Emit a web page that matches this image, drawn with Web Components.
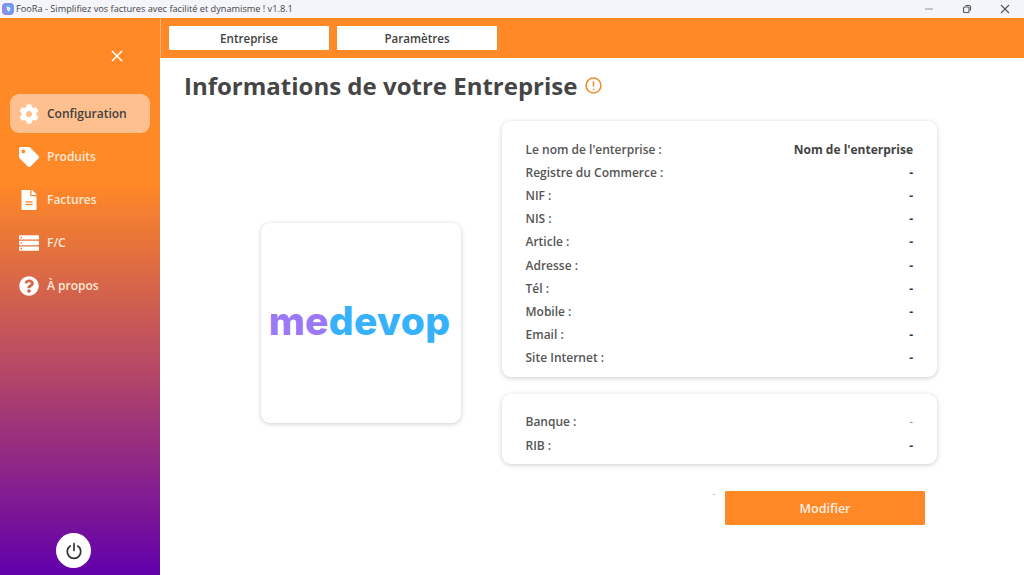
<!DOCTYPE html>
<html lang="fr">
<head>
<meta charset="utf-8">
<title>FooRa</title>
<style>
  html, body { margin: 0; height: 100%; overflow: hidden; }
  body { font-family: "Open Sans", "Noto Sans", sans-serif; color: #444; background: #fff; }
  app-shell { height: 575px; }
</style>
</head>
<body>
<app-shell>
  <title-bar slot="title" label="FooRa - Simplifiez vos factures avec facilité et dynamisme ! v1.8.1"></title-bar>
  <side-bar slot="side">
    <nav-item icon="cog" active>Configuration</nav-item>
    <nav-item icon="tag">Produits</nav-item>
    <nav-item icon="file">Factures</nav-item>
    <nav-item icon="server">F/C</nav-item>
    <nav-item icon="help">À propos</nav-item>
  </side-bar>
  <top-tabs slot="tabs">
    <tab-button>Entreprise</tab-button>
    <tab-button>Paramètres</tab-button>
  </top-tabs>
  <company-page slot="main">
    <info-card>
      <info-row label="Le nom de l'enterprise :" value="Nom de l'enterprise" strong></info-row>
      <info-row label="Registre du Commerce :" value="-"></info-row>
      <info-row label="NIF :" value="-"></info-row>
      <info-row label="NIS :" value="-"></info-row>
      <info-row label="Article :" value="-"></info-row>
      <info-row label="Adresse :" value="-"></info-row>
      <info-row label="Tél :" value="-"></info-row>
      <info-row label="Mobile :" value="-"></info-row>
      <info-row label="Email :" value="-"></info-row>
      <info-row label="Site Internet :" value="-"></info-row>
    </info-card>
    <info-card>
      <info-row label="Banque :" value="-" light></info-row>
      <info-row label="RIB :" value="-"></info-row>
    </info-card>
  </company-page>
</app-shell>

<script>
const ICONS = {
  cog: ['0 0 512 512', 'M487.4 315.7l-42.6-24.6c4.3-23.2 4.3-47 0-70.2l42.6-24.6c4.9-2.8 7.1-8.6 5.5-14-11.1-35.6-30-67.8-54.7-94.6-3.8-4.1-10-5.1-14.8-2.3L380.8 110c-17.9-15.4-38.5-27.3-60.8-35.1V25.8c0-5.6-3.9-10.5-9.4-11.7-36.7-8.2-74.3-7.8-109.2 0-5.5 1.2-9.4 6.1-9.4 11.7V75c-22.2 7.9-42.8 19.8-60.8 35.1L88.7 85.5c-4.9-2.8-11-1.9-14.8 2.3-24.7 26.7-43.6 58.9-54.7 94.6-1.7 5.4.6 11.2 5.5 14L67.3 221c-4.3 23.2-4.3 47 0 70.2l-42.6 24.6c-4.9 2.8-7.1 8.6-5.5 14 11.1 35.6 30 67.8 54.7 94.6 3.8 4.1 10 5.1 14.8 2.3l42.6-24.6c17.9 15.4 38.5 27.3 60.8 35.1v49.2c0 5.6 3.9 10.5 9.4 11.7 36.7 8.2 74.3 7.8 109.2 0 5.5-1.2 9.4-6.1 9.4-11.7v-49.2c22.2-7.9 42.8-19.8 60.8-35.1l42.6 24.6c4.9 2.8 11 1.9 14.8-2.3 24.7-26.7 43.6-58.9 54.7-94.6 1.5-5.5-.7-11.3-5.6-14.1zM256 336c-44.1 0-80-35.9-80-80s35.9-80 80-80 80 35.9 80 80-35.9 80-80 80z'],
  tag: ['0 0 512 512', 'M0 252.118V48C0 21.49 21.49 0 48 0h204.118a48 48 0 0 1 33.941 14.059l211.882 211.882c18.745 18.745 18.745 49.137 0 67.882L293.823 497.941c-18.745 18.745-49.137 18.745-67.882 0L14.059 286.059A48 48 0 0 1 0 252.118zM112 64c-26.51 0-48 21.49-48 48s21.49 48 48 48 48-21.49 48-48-21.49-48-48-48z'],
  file: ['0 0 384 512', 'M224 136V0H24C10.7 0 0 10.7 0 24v464c0 13.3 10.7 24 24 24h336c13.3 0 24-10.7 24-24V160H248c-13.2 0-24-10.8-24-24zm64 236c0 6.6-5.4 12-12 12H108c-6.6 0-12-5.4-12-12v-8c0-6.6 5.4-12 12-12h168c6.6 0 12 5.4 12 12v8zm0-64c0 6.6-5.4 12-12 12H108c-6.6 0-12-5.4-12-12v-8c0-6.6 5.4-12 12-12h168c6.6 0 12 5.4 12 12v8zm96-186.1v6.1H256V0h6.1c6.4 0 12.5 2.5 17 7l97.9 98c4.5 4.5 7 10.6 7 16.9z'],
  server: ['0 0 512 512', 'M0 80a24 24 0 0 1 24-24h464a24 24 0 0 1 24 24v64a24 24 0 0 1-24 24H24a24 24 0 0 1-24-24zM56 92a20 20 0 1 0 0 40 20 20 0 0 0 0-40zM0 224a24 24 0 0 1 24-24h464a24 24 0 0 1 24 24v64a24 24 0 0 1-24 24H24a24 24 0 0 1-24-24zM56 236a20 20 0 1 0 0 40 20 20 0 0 0 0-40zM0 368a24 24 0 0 1 24-24h464a24 24 0 0 1 24 24v64a24 24 0 0 1-24 24H24a24 24 0 0 1-24-24zM56 380a20 20 0 1 0 0 40 20 20 0 0 0 0-40z'],
  help: ['0 0 512 512', 'M504 256c0 136.997-111.043 248-248 248S8 392.997 8 256C8 119.083 119.043 8 256 8s248 111.083 248 248zM262.655 90c-54.497 0-89.255 22.957-116.549 63.758-3.536 5.286-2.353 12.415 2.715 16.258l34.699 26.31c5.205 3.947 12.621 3.008 16.665-2.122 17.864-22.658 30.113-35.797 57.303-35.797 20.429 0 45.698 13.148 45.698 32.958 0 14.976-12.363 22.667-32.534 33.976C247.128 238.528 216 254.941 216 296v4c0 6.627 5.373 12 12 12h56c6.627 0 12-5.373 12-12v-1.333c0-28.462 83.186-29.647 83.186-106.667 0-58.002-60.165-102-116.531-102zM256 338c-25.365 0-46 20.635-46 46 0 25.364 20.635 46 46 46s46-20.636 46-46c0-25.365-20.635-46-46-46z']
}

// Small helper so each class only has to state its markup
class Base extends HTMLElement {
  constructor(){
    super()
    this.attachShadow({mode: 'open'})
  }
  connectedCallback(){
    this.shadowRoot.innerHTML = this.template
  }
}

class AppShell extends Base {
  get template(){ return /* html */`
    <style>
      :host { display: grid; grid-template: 18px 40px 1fr / 160px 1fr; width: 1024px; }
      .title { grid-column: 1 / 3; }
      .side { grid-row: 2 / 4; min-height: 0; display: block; }
      .tabs { display: block; }
      .main { display: block; min-height: 0; }
    </style>
    <div class="title"><slot name="title"></slot></div>
    <div class="side"><slot name="side"></slot></div>
    <div class="tabs"><slot name="tabs"></slot></div>
    <div class="main"><slot name="main"></slot></div>
  `}
}

class TitleBar extends Base {
  get template(){ return /* html */`
    <style>
      :host { display: flex; align-items: center; height: 18px; background: #f4f5fa; color: #444;
        font: 9.2px/18px "Open Sans", sans-serif; }
      .logo { width: 12px; height: 12px; margin: 0 2px 0 2px; flex: none; }
      .label { flex: 1; white-space: nowrap; }
      .ctl { width: 38px; height: 18px; display: flex; align-items: center; justify-content: center; flex: none; }
      .ctl svg { width: 10px; height: 10px; fill: none; stroke: #555; stroke-width: 1.1; }
    </style>
    <svg class="logo" viewBox="0 0 12 12">
      <rect width="12" height="12" rx="4" fill="#8f8be6"/>
      <path d="M3 2.5 Q7 0 11 3 L11 8 Q9 12 6 10.5 Z" fill="#5ca7ea"/>
      <path d="M4.5 3.5 Q8.5 3 8.5 6 Q7.5 8 6.5 9 L5 6.5 Z" fill="#e9e4fb"/>
    </svg>
    <span class="label">${this.getAttribute('label')}</span>
    <div class="ctl"><svg viewBox="0 0 10 10"><path d="M1 5h8" stroke="#999"/></svg></div>
    <div class="ctl"><svg viewBox="0 0 10 10"><rect x="1.5" y="3" width="5.5" height="5.5" rx="1"/><path d="M3.5 1.5h4a1 1 0 0 1 1 1v4"/></svg></div>
    <div class="ctl"><svg viewBox="0 0 10 10"><path d="M1 1l8 8M9 1l-8 8"/></svg></div>
  `}
}

class SideBar extends Base {
  get template(){ return /* html */`
    <style>
      :host { display: flex; flex-direction: column; height: 557px; box-sizing: border-box;
        background: linear-gradient(180deg, #ff8827 30%, #6200ac 100%); }
      .close { display: flex; justify-content: flex-end; padding: 32px 37px 0 0; height: 12px; margin-bottom: 32px; }
      .close svg { width: 12px; height: 12px; stroke: #fff; stroke-width: 1.6; }
      .items { display: flex; flex-direction: column; padding: 0 10px; gap: 4px; flex: 1; }
      .power { align-self: center; width: 35px; height: 35px; margin: 0 13px 7px 0; border-radius: 50%; background: #fff;
        display: flex; align-items: center; justify-content: center; }
      .power svg { width: 18px; height: 18px; fill: none; stroke: #333; stroke-width: 1.5; stroke-linecap: round; }
    </style>
    <div class="close"><svg viewBox="0 0 12 12"><path d="M1 1l10 10M11 1L1 11"/></svg></div>
    <div class="items"><slot></slot></div>
    <div class="power"><svg viewBox="0 0 16 16"><path d="M8 1.5v6"/><path d="M4.6 3.6a6 6 0 1 0 6.8 0"/></svg></div>
  `}
}

class NavItem extends Base {
  get template(){
    const [box, d] = ICONS[this.getAttribute('icon')]
    return /* html */`
    <style>
      :host { display: flex; align-items: center; height: 39px; padding-left: 9px; border-radius: 9px;
        color: #ffe9d6; font: 600 12px "Open Sans", sans-serif; }
      :host([active]) { background: #ffc08f; color: #3f3f3f; }
      svg { width: 20px; height: 20px; fill: #fff; margin-right: 8px; flex: none; }
    </style>
    <svg viewBox="${box}"><path fill-rule="evenodd" d="${d}"/></svg>
    <slot></slot>
  `}
}

class TopTabs extends Base {
  get template(){ return /* html */`
    <style>
      :host { display: flex; gap: 8px; height: 40px; padding: 8px; box-sizing: border-box; background: #ff8827;
        border-left: 1px solid #ffb27a; }
    </style>
    <slot></slot>
  `}
}

class TabButton extends Base {
  get template(){ return /* html */`
    <style>
      :host { display: flex; align-items: center; justify-content: center; width: 160px; height: 24px;
        background: #fff; border-radius: 1px; color: #3f3f3f; font: 600 11.6px "Open Sans", sans-serif; }
    </style>
    <slot></slot>
  `}
}

class CompanyPage extends Base {
  get template(){ return /* html */`
    <style>
      :host { display: block; padding: 9px 87px 0 24px; }
      h1 { display: flex; align-items: center; margin: 0; height: 38px; gap: 8px;
        font: 700 24px/38px "Open Sans", sans-serif; color: #454545; white-space: nowrap; }
      h1 svg { width: 17px; height: 17px; margin-top: -2px; fill: none; stroke: #f08c2a; stroke-width: 1.5; flex: none; }
      .body { display: flex; gap: 41px; margin-top: 16px; }
      .logo-wrap { width: 200px; padding: 102px 0 0 77px; flex: none; }
      .logo-card { width: 200px; height: 200px; background: #fff; border-radius: 9px;
        box-shadow: 0 1px 5px rgba(0,0,0,.2); display: flex; align-items: center; justify-content: center; }
      .logo { font: 800 39px/1 Inter, "Open Sans", sans-serif; letter-spacing: .3px; white-space: nowrap; margin: 0 3px 5px 0; }
      .logo b { font-weight: inherit; color: #9a78f6; }
      .logo i { font-style: normal; color: #36b1fb; }
      .cards { flex: 1; display: flex; flex-direction: column; gap: 17px; min-width: 0; }
      .actions { display: flex; justify-content: flex-end; align-items: flex-start; padding: 10px 12px 0 0; }
      .dot { font-size: 9px; line-height: 9px; margin-right: 10px; color: #666; margin-top: -4px; }
      button { width: 200px; height: 34px; border: 0; border-radius: 1px; background: #ff8827; color: #ffeee0;
        font: 600 12.5px "Open Sans", sans-serif; }
    </style>
    <h1>Informations de votre Entreprise
      <svg viewBox="0 0 16 16"><circle cx="8" cy="8" r="7"/><path d="M8 4v5M8 11v1.2"/></svg>
    </h1>
    <div class="body">
      <div class="logo-wrap">
        <div class="logo-card"><div class="logo"><b>me</b><i>devop</i></div></div>
      </div>
      <div class="cards">
        <slot></slot>
        <div class="actions"><span class="dot">.</span><button>Modifier</button></div>
      </div>
    </div>
  `}
}

class InfoCard extends Base {
  get template(){ return /* html */`
    <style>
      :host { display: block; background: #fff; border-radius: 9px; padding: 16.6px 24px 7.4px 23.5px;
        box-shadow: 0 1px 5px rgba(0,0,0,.2); }
    </style>
    <slot></slot>
  `}
}

class InfoRow extends Base {
  get template(){ return /* html */`
    <style>
      :host { display: flex; justify-content: space-between; height: 23.2px;
        font: 600 12px/23.2px "Open Sans", sans-serif; color: #555; }
      .value { color: #333; font-weight: 700; }
      :host([strong]) .value { color: #444; }
      :host([light]) .value { color: #999; font-weight: 400; }
    </style>
    <span>${this.getAttribute('label')}</span>
    <span class="value">${this.getAttribute('value')}</span>
  `}
}

customElements.define('app-shell', AppShell)
customElements.define('title-bar', TitleBar)
customElements.define('side-bar', SideBar)
customElements.define('nav-item', NavItem)
customElements.define('top-tabs', TopTabs)
customElements.define('tab-button', TabButton)
customElements.define('company-page', CompanyPage)
customElements.define('info-card', InfoCard)
customElements.define('info-row', InfoRow)
</script>
</body>
</html>
